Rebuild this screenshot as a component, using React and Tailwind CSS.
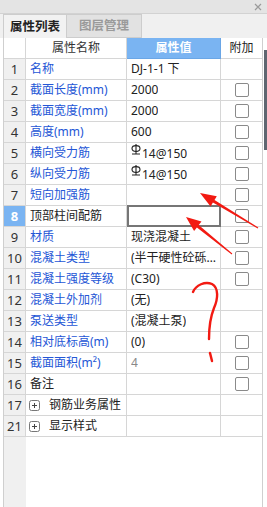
import React from 'react'

const rows = [
  { n: '1', name: '名称', value: 'DJ-1-1 下', check: false },
  { n: '2', name: '截面长度(mm)', value: '2000', check: true },
  { n: '3', name: '截面宽度(mm)', value: '2000', check: true },
  { n: '4', name: '高度(mm)', value: '600', check: true },
  { n: '5', name: '横向受力筋', value: '14@150', steel: true, check: true },
  { n: '6', name: '纵向受力筋', value: '14@150', steel: true, check: true },
  { n: '7', name: '短向加强筋', value: '', check: true },
  { n: '8', name: '顶部柱间配筋', value: '', check: true, selected: true, black: true },
  { n: '9', name: '材质', value: '现浇混凝土', check: true },
  { n: '10', name: '混凝土类型', value: '(半干硬性砼砾石31.5mm)', check: true },
  { n: '11', name: '混凝土强度等级', value: '(C30)', check: true },
  { n: '12', name: '混凝土外加剂', value: '(无)', check: false },
  { n: '13', name: '泵送类型', value: '(混凝土泵)', check: false },
  { n: '14', name: '相对底标高(m)', value: '(0)', check: true },
  { n: '15', name: '截面面积(m²)', value: '4', check: true, muted: true },
  { n: '16', name: '备注', value: '', check: true, black: true },
  { n: '17', name: '钢筋业务属性', value: '', check: false, black: true, group: true },
  { n: '21', name: '显示样式', value: '', check: false, black: true, group: true },
]

const SteelMark = () => (
  <svg width="10" height="11" viewBox="0 0 10 11" className="inline-block mr-[1px] align-[3px]">
    <path d="M1 4.5 C1 2.4 2.7 1.6 5 1.6 C7.3 1.6 9 2.4 9 4.5 C9 6.6 7.3 7.4 5 7.4 C2.7 7.4 1 6.6 1 4.5 Z" fill="none" stroke="#222" strokeWidth="1.1" />
    <path d="M5 0 V9.4 M1 10 H9" stroke="#222" strokeWidth="1.1" />
  </svg>
)

const Checkbox = () => (
  <div className="w-[14px] h-[14px] border border-[#8a8a8a] rounded-[2px] bg-white" />
)

const PlusBox = () => (
  <svg width="11" height="11" viewBox="0 0 11 11" className="shrink-0">
    <rect x="0.5" y="0.5" width="10" height="10" rx="2" fill="white" stroke="#777" />
    <path d="M3 5.5 H8 M5.5 3 V8" stroke="#444" strokeWidth="1" />
  </svg>
)

const Row = ({ r }) => {
  const nameColor = r.black ? 'text-[#222]' : 'text-[#2456d6]'
  return (
    <div className="grid grid-cols-[22px_101px_94px_41px] h-[21px]">
      <div
        className={
          r.selected
            ? 'bg-[#7ab4f2] text-white font-bold text-[13px] border-r border-b border-[#d6d6d6] flex items-center justify-center'
            : 'bg-[#f0f0f0] text-[#333] text-[13px] border-r border-b border-[#d6d6d6] flex items-center justify-center'
        }
      >
        {r.n}
      </div>
      <div className={`border-r border-b border-[#d6d6d6] flex items-center pl-[4px] whitespace-nowrap overflow-hidden ${nameColor}`}>
        {r.group ? (
          <div className="flex items-center gap-[9px] -ml-[1px]">
            <PlusBox />
            <span>{r.name}</span>
          </div>
        ) : (
          r.name
        )}
      </div>
      {r.selected ? (
        <div className="border-2 border-[#767676] -mt-[1px] h-[22px] bg-white" />
      ) : (
        <div
          className={`border-r border-b border-[#d6d6d6] flex items-center pl-[4px] pr-[2px] overflow-hidden ${
            r.muted ? 'text-[#888]' : 'text-[#222]'
          }`}
        >
          <span className="truncate leading-[18px]">
            {r.steel && <SteelMark />}
            {r.value}
          </span>
        </div>
      )}
      <div className="border-b border-[#d6d6d6] flex items-center justify-center">
        {r.check && <Checkbox />}
      </div>
    </div>
  )
}

const App = () => {
  return (
    <div
      className="relative w-[267px] h-[507px] bg-white flex flex-col overflow-hidden text-[12px] leading-[18px]"
      style={{ fontFamily: '"Noto Sans", "Noto Sans CJK SC", sans-serif' }}
    >
      {/* title bar */}
      <div className="h-[14px] bg-[#e4e4e4] border-b border-[#d2d2d2] flex items-center justify-end pr-[5px]">
        <svg width="8" height="8" viewBox="0 0 8 8">
          <path d="M1 1 L7 7 M7 1 L1 7" stroke="#9a9a9a" strokeWidth="1.2" />
        </svg>
      </div>

      {/* tabs */}
      <div className="h-[24px] bg-[#f0f0f0] flex items-stretch pl-[3px]">
        <div className="w-[64px] border border-[#cdcdcd] border-b-0 bg-[#f2f2f2] flex items-center justify-center font-bold text-[12.5px] text-[#222]">
          属性列表
        </div>
        <div className="w-[75px] border border-l-0 border-[#cdcdcd] bg-[#e2e2e2] flex items-center justify-center font-bold text-[12.5px] text-[#9a9a9a]">
          图层管理
        </div>
      </div>

      {/* table */}
      <div className="flex flex-1 min-h-0 pl-[3px]">
        <div className="w-[260px] border-l border-r border-[#cfcfcf] flex flex-col">
          <div className="grid grid-cols-[22px_101px_94px_41px] h-[21px] bg-white">
            <div className="border-r border-b border-[#d6d6d6]" />
            <div className="border-r border-b border-[#d6d6d6] flex items-center justify-center text-[#333]">
              属性名称
            </div>
            <div className="bg-[#7ab4f2] border-r border-b border-[#6aa6e6] flex items-center justify-center text-white font-bold">
              属性值
            </div>
            <div className="border-b border-[#d6d6d6] flex items-center justify-center text-[#222]">
              附加
            </div>
          </div>

          {rows.map((r) => (
            <Row key={r.n} r={r} />
          ))}

          <div className="flex-1 grid grid-cols-[22px_1fr]">
            <div className="bg-[#f0f0f0]" />
            <div className="bg-white" />
          </div>
        </div>

        {/* scrollbar */}
        <div className="flex-1 pt-[12px] pl-[1px]">
          <div className="w-[3px] h-[100px] bg-[#5e6670]" />
        </div>
      </div>

      {/* hand-drawn annotations */}
      <svg className="absolute inset-0 pointer-events-none" width="267" height="507" viewBox="0 0 267 507">
        <polygon
          points="200,193 216.8,196.2 214.5,200 258.3,227.6 257.7,228.4 212.9,202.6 210.6,206.4"
          fill="#f21a12"
        />
        <polygon
          points="186,217 201.5,221.5 198.7,225 232.3,253.6 231.7,254.4 196.9,227.4 194.1,230.9"
          fill="#f21a12"
        />
        <path
          d="M193 292 C196 285 205 281 212 284 C219 288 218 299 214 308 C210 318 209 328 209 339"
          fill="none"
          stroke="#f21a12"
          strokeWidth="2.4"
          strokeLinecap="round"
        />
        <path d="M210 353 L212 361" stroke="#f21a12" strokeWidth="2.4" strokeLinecap="round" />
      </svg>
    </div>
  )
}

export default App
